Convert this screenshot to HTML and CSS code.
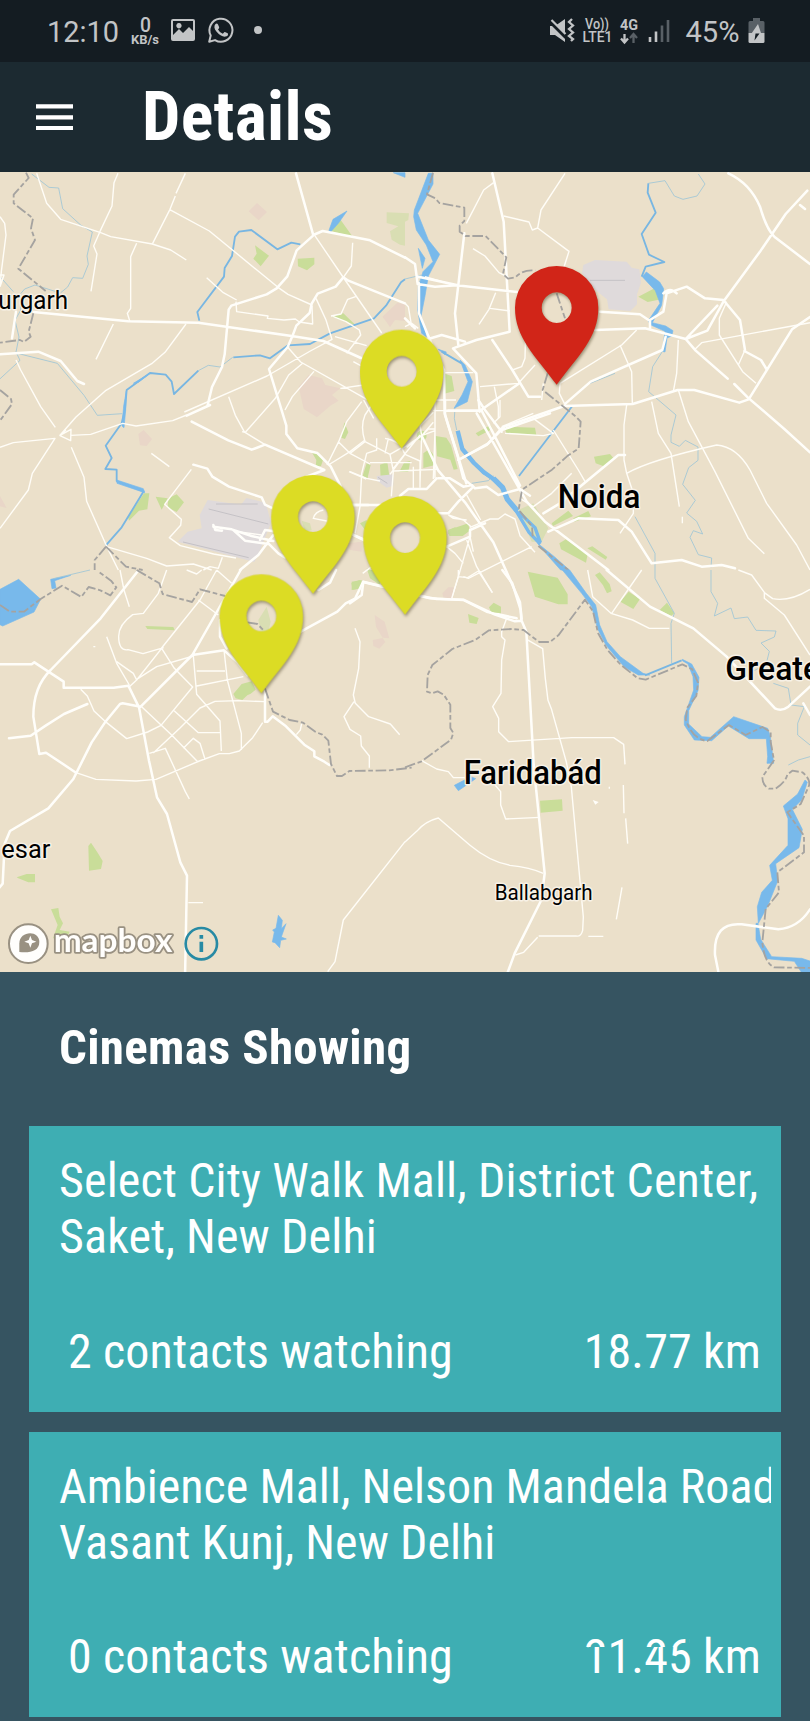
FILE: index.html
```html
<!DOCTYPE html>
<html lang="en">
<head>
<meta charset="utf-8">
<meta name="viewport" content="width=device-width">
<title>Details</title>
<link rel="stylesheet" href="styles.css">
</head>
<body>
<div class="status">
  <svg class="status-icons" viewBox="0 0 405 62" width="405" height="62">
    <text x="47" y="42" font-size="29" textLength="72" lengthAdjust="spacingAndGlyphs">12:10</text>
    <text x="145.500" y="31.500" font-size="21" font-weight="500" text-anchor="middle" textLength="11" lengthAdjust="spacingAndGlyphs">0</text>
    <text x="131" y="43.500" font-size="12" font-weight="700" textLength="28" lengthAdjust="spacingAndGlyphs">KB/s</text>
    <path fill-rule="evenodd" d="M173 19h20q2 0 2 2v18q0 2-2 2h-20q-2 0-2-2V21q0-2 2-2zm0 2v14l6-6 4 4 6-6 4 4V21zm6 2a2.700 2.700 0 1 1-.1 0z"/>
    <path d="M209.200 41.800l1.500-6.300a11.500 11.500 0 1 1 4.300 4.600z" fill="none" stroke="#c2c4c6" stroke-width="2" stroke-linejoin="round"/>
    <path d="M215.500 24q1.500-1.200 2.500.5l1.200 2.800q.2.800-1.200 2.200 1.800 3.300 4.800 4.300l1.700-1.800q.6-.5 3.500 1.400.4 2.800-2.600 3.200-4.600.4-9-5-3.500-4.600-.9-7.600z"/>
    <circle cx="258" cy="30" r="4"/>
  </svg>
  <svg class="status-icons" viewBox="405 0 405 62" width="405" height="62">
    <path d="M550 26h5l10-7v23l-10-7h-5z"/>
    <path d="M549 20.500l17 17" stroke="#141c22" stroke-width="3.500"/>
    <path d="M551.500 20l14 14" fill="none" stroke="#c2c4c6" stroke-width="2.200"/>
    <path d="M572 19l-3 3 4 3.500-4 3.500 4 3.500-4 3.500 4 3-2 2" fill="none" stroke="#c2c4c6" stroke-width="2.300"/>
    <text x="585" y="29" font-size="14" font-weight="500" textLength="24" lengthAdjust="spacingAndGlyphs">Vo))</text>
    <text x="582.500" y="42" font-size="14" font-weight="500" textLength="30" lengthAdjust="spacingAndGlyphs">LTE1</text>
    <text x="620" y="29.500" font-size="14" font-weight="700" textLength="18" lengthAdjust="spacingAndGlyphs">4G</text>
    <path d="M624.500 34v8M621 38.500l3.500 4 3.500-4" fill="none" stroke="#c2c4c6" stroke-width="2.300"/>
    <path d="M633.500 43v-8M630 38l3.500-4 3.500 4" fill="none" stroke="#596066" stroke-width="2.300"/>
    <path d="M650 37v5M656 31.500V42" stroke="#c2c4c6" stroke-width="2.600"/>
    <path d="M662 25.500V42M668 20v22" stroke="#596066" stroke-width="2.600"/>
    <text x="685.500" y="42" font-size="29" textLength="54" lengthAdjust="spacingAndGlyphs">45%</text>
    <path fill="#596066" d="M753 18h7v3h3q1.500 0 1.500 1.500V33h-16V22.500q0-1.500 1.500-1.500h3z"/>
    <path d="M748.500 33h16v8.500q0 1.500-1.500 1.500h-13q-1.500 0-1.500-1.500z"/>
    <path d="M758 24l-6.500 9.500h5L758 33h3z"/>
    <path fill="#141c22" d="M755.500 33.500h4l-5 7z"/>
  </svg>
</div>
<header class="bar">
  <svg class="menu" viewBox="0 0 37 27" width="37" height="27"><path d="M0 2.300h37M0 13.300h37M0 24h37" stroke="#fff" stroke-width="4.200"/></svg>
  <h1 class="title"><span class="cond">Details</span></h1>
</header>
<svg class="map" viewBox="0 6 2430 2400" width="810" height="800">
  <!-- north-west -->
  <g>
    <g class="park">
      <path d="M765 226l42 31-25 32-22-23 10-15zM893 266l50-3v20l-22 18-27-12zM990 182l30-35 38 53zM995 440l35-10 37 36zM1033 757l12 30-10 20-11-4zM935 846l20 0 14 24-6 18-16 2 2-20zM505 985l25-12 22 24-22 29-27-14zM467 980l36 5-18 34zM432 970h16l-6 48-25 4-30 30-3-10zM1100 880l12 5-10 42-14-10zM1140 884l22-8 6 42-26 6zM1080 1060l20-10v36z"/>
    </g>
    <path class="pale" d="M1160 127l67 3-2 20-10 5v72l-15-3-25-15-5-25 25-15-35-10zM905 1052l25 8 5 20-20 5z"/>
    <path class="rose" d="M746 124l25-25 30 27-25 25zM896 650l30-35 40 10 10 20 45 10-25 20 20 17-25 15-40 35-40-25zM1147 440l45-42 23 5v50l-30-3-15 22-15-22zM415 792l16-12 25 27-16 21-20-2zM0 978l20 36-20-5zM1040 1120l45-5v30l-35-5z"/>
    <path class="apron" d="M623 990l100 14 16-20 58 14 16 60-20 50-20 50-10 18-230-61 30-30 42-10-6-40zM1130 918l50-5v34l-20 6-28-20z"/>
    <path class="runway" d="M648 1002h125M626 1017l179 45M549 1116l197 47M1134 922l28 18"/>
    <path class="stream" d="M95 12l52 40 29 2 12 62 55 50 34 20-16 72 4 25-17 42-30-2-15 28-22 18-76-24-31 12-12 14v50l-17 30 12 50-9 45 12 25-66 61M0 320l40 45M52 550l120 30 80 96 40 60 75-5M595 602l30-16 35 5 38-29"/>
    <path class="canal" d="M598 452l-6-26 80-106 2-26 22-36 9-58 12-15 37-5 78 58 42-20 27 5M1215 328l-12 9-45 70-36 38-132 45-60 32-66 4-54 39-30-9-80 6M595 602l-73 70-7-37-18-21-47-5-70 51-5 58-10 42-48 67 18 37-19 33 34 2v34l81 31-66 108-48 55"/>
    <path class="waterfill" d="M987 181l12-33 42-25-26 37-24 27zM350 930l80 26 4 12-83-28zM366 768l5-60 8-45-2 58-5 52zM400 640l50-30-35 27zM1180 8h35v14z"/>
    <path class="road" d="M110 10l30 90 42 48 120 40 30 12 125 22 55 18 47 30M354 10l-12 28-6 70-35 74-20 46 10 24-18 112M556 10l-28 60M526 78l-16 40-52 102M508 118l120 65 206 169 30 21 72 32M410 220l-18 40v155l-10 15 8 25M0 140l14 20 4 35-14 110-4 45M0 315h12l-12 35M620 323l50 45 40 22M340 462l-52 106M558 462l-63 85-40 34-137 80-90 80-48 55 33-18-1 34-32-15 18-18M0 832l40-14 125-13-68 105-12 50-85 115M48 570l14 30 60 110 44 62M214 832l38 90 8 72 60 135 35 71M212 796l60-3 96-33 40 8 110-16 42-17M454 850l54 40M574 898l-80 105 50 45-2 18-34 37 33 24 100 25 67 12M708 395l2 30 94 13-2 7 50 5 34-3 12 9 40 6-2-55M948 385l30 65 18 58-65 35-130 75-248 108M686 680l20 56 28 51-8-2M736 787l90-102 40-70 42-35M735 787l60 37M855 720l22-40 65-76M862 530l40 46 200 113M1067 380l-24 8-20 44-30 6M1058 218l-4 70-24 34M944 196l85 125 116 168M1000 440l38 15 40 25 4 15-42 55M1005 500l95 27M1021 655l70-10M1085 695l-45 60-24 60-35 70M1091 690l30 55M985 885l65-40 45-35M1015 815l35 35 60 32M1047 905l52 22M715 1085l70 10M1060 575l22 12M320 1130l120 35 60 23 80-6 55 18M610 1200l20-10 25 5 12-33M970 1020q-25 5-30 25l40 8"/>
    <path class="major" d="M888 10l52 186-50 45-28 78-32 36-30 18-106 34-8 12-12 134-8 38-30 60-13 54M940 195l28-12 142 28 105 52M1215 400l-170-68-15-10-23 28-54 21-18 30-6 28-40 38-12 32-14 32-56 66 52 170v25l33 43 60 14 40 40 30 60M100 426l285 28 210 4 280 40 95 15 113 51M575 755l110 56 70 28 40-15 178 76-80 30M580 884l42 12 15 24 50 30 98 32 10 22 25 12M0 553l115-8 67 28 50 60 20 9M48 425l-12 80M560 737l70-32M720 1200l55-45 45-60M780 1110l15-30 40 5M805 1120l30 30 20 12M1060 1005h155M1060 1095l30 15M640 1070l55 8 60 20 65 15M640 1065l6 15 20 2M700 1080l35 32 70 10"/>
    <path class="border" d="M78 8l8 16-45 50 0 26 58 45-6 30 12 35-50 86 82 67M100 430l-14 55 6 15-20 16-12-6-60 8M0 660l33 27 3 15-36 50M318 1130l-34 40v30M318 1130l60 60 50 10"/>
  </g>
  <!-- north-east -->
  <g transform="translate(1215 0)">
    <path class="park" d="M115 610l25 8 8 45-30 8zM212 790l45-25 5 12-42 22zM298 770l92 3 4 22-90-6zM92 798l32 5 14 22 20 72-12 2-10-30-40-10zM55 850l17-12 15 18v30l-32 8zM567 860l48-8 10 12-25 26-28-10zM660 380l25-7 8 14-15 16-18-6zM700 380l50-26 24 10-6 24-40 8zM130 1080l60-20 3 20-25 15-38-2zM440 1060l50-38 14 16-60 30zM505 1045l45-22 8 16-50 16zM463 1120l20-12 65 45-5 25-75-40zM547 1135l15-6 45 32-5 8zM0 875l12 5-5 20-7 2z"/>
    <path class="pale" d="M340 1020l45-20 45 75-20 40-30 0z"/>
    <path class="apron" d="M535 285l35-15 95 5 15 18 23 5 5 40-12 35v30l-20 20-65-5-5-30-50-40-25-40z"/>
    <path class="runway" d="M555 331h105"/>
    <path class="waterfill" d="M70 10h14v32l-46 88 32 80 34 43-34 65-10 60-12 60 16 62-14-10-12-70 2-70 14-45 30-30-20-50-30-45-8-40 2-20zM40 235l20 30-8 30zM100 538l24 8-4 8zM165 570l15 15 22 50-15 60-40 20 24-40 18-40zM712 320l12-14 40 30 12 20-6 50-28 52 40 10 22 14-4 16-14 6-6 42-8-2 8-60-44-20-6-12 35-52-14-38zM398 1120l50 40 45 40h-26l-40-45z"/>
    <path class="stream" d="M730 40l50-8 28 46 26 10 42-10 24-36-20-30M775 540l-32 50-12 75 82 70-15 60v22l25 12 18-18 38 20v40l-28 22-18 50 38 48-26 38 30 25 18 38-28-10-10 20 25 52 40 10-2 28M690 1040l60 110v50M0 327l50-12M200 940l50-8 15-15"/>
    <path class="canal" d="M730 40l-2 28 24 60-42 64 22 62 46 22-56 14-12 30M502 708l-160 210M110 545l60 35"/>
    <path class="stream" d="M150 715l-2 30 7 35M555 640l75-30"/>
    <path class="wide" stroke-width="13" d="M158 782l14 55 35 42 30 28 42 30"/>
    <path class="wide" stroke-width="6" d="M205 875l30 35 40 22"/>
    <path class="wide" stroke-width="16" d="M265 925l28 28 14 35 30 35"/>
    <path class="wide" stroke-width="10" d="M327 1012l45 75 34 35M340 1025l50 48 16 45"/>
    <path class="road" d="M480 10l-72 110-10 54 94 70-16 50M398 174l-16 6-10-24-76-18M266 38l-30 22-52 100M204 236l36 22 42 50 30 15M272 368l-20 50-30 45M255 415l60 8M362 480l-2 85-10 25-28 10M390 585l-50 55-115 10M465 640l185-115 45-45M465 640l-2 30 20 40M645 525l35 80 2 95M268 650l12 60v35M415 640l-5 50M665 705l-8 60v105l8 40 20 60v60l-40 60M740 695l20 95 38 60 25 160M820 660l30 95 80 150 100 200 48 46M820 510l-5 100-10 55M1215 458l-325 60-20 20M965 395l-22 50 0 50 70 110 40 35M1020 540l-20 45M445 780l75 120 22 38M665 910q70-40 270-85 60 5 100 75l50 100 90 125 40 75M832 1040v20M345 985l40 25 55-40 60-60M115 608h90M115 690h38M60 320l70 20M385 745l60 45-30 7-115-7M290 770l95-40M0 470l20-10 20 15M0 400l10 10 10 60"/>
    <path class="major" d="M262 10l34 145 18 330-100 25-70 25 70 75 10 115M178 190l-28 240 10 95M0 262l30 20 8 60 52 8 65-4 182 20M40 320l115 25M42 340l0 90 45 110 30 60 2 130 65 210M60 510l50-15 70 20M0 445l30 30M262 510l60 90 48 80h35M225 722l115-80M160 870l90-50 48-50 180-62 205-6 135-42 50 0 135 38 28-10 130-210 95-65M230 722l-110 0M230 722l115 225M215 730l150 265 55 60 190 145M482 700l75-65 215-95 10-40M570 480l150-5 122 32 65-25 50-90 110-150 75-110 65-70M842 507l30 35 96 84M842 507l95-100M585 425l120 8 30 20v25M735 450l40-25 10-55 60-20 55 35 55 5 50 60 15 90M775 370q20-20 40 0M988 642l40 40 110 95 77 70M970 10q65 30 95 100 20 70 45 92l105 80M1018 543l50 27 18 30M1185 105l15 12M415 1030l50-30 175-145h20M430 1085l90-40 120 5 40 35 60 95 90-10 60 20 60-5 40 10"/>
    <path class="border" d="M84 8l-18 65 25 12 12 14 75 14v40l-14 14v18l18 13h60l62 64-10 50 15 14 22-4q25-25 60-20M455 370l25 75M428 610l-15 50 100 80 14 15-6 80-35 24-45 40-90 60-10 60 40 50 2 30M400 1128l90 72"/>
  </g>
  <!-- Delhi centre -->
  <g transform="translate(1050 690)">
    <circle cx="215" cy="107" r="15" fill="#c9dd99"/>
    <path class="park" d="M148 215l15-28 18-4-6 32zM295 390l20-8 10 6 25-15 8 20-20 15h-40zM50 505l40 20v30l-30-20zM5 545l30-5v25l-30 5z"/>
    <path class="road" d="M75 0L45 45q-15 35 0 80l-45 35M45 125l75 38 35-20M105 115l20 5 25 12M80 115v35l-30 10-15 60-5 100-15 80M120 163l10 50-6 76M105 160l10-45M155 143l10 20 45 20v80M165 163l-45 60M130 205l80-100M130 213l135-5M190 200v65M60 188h125M0 215l50 20 40 8M215 107l-45 35M215 107l40-15-5 145M215 107L210 250M215 107l-60 40M215 107l20-20h20M215 107l-5-30 40-40M215 107l35-40M240 20L215 60M255 0v235M285 0h-30M250 32h60M350 285l42 75M295 345l45 15 25 22M295 345l15 10 40 5M360 410l-35 120-20 65M340 530l15 5 190-95M290 440l25 20 25 30M350 420l30 80 47 78M360 382l60-25 25 0 20-15 30 15 15 50 45 50M450 0v50l-20 20M38 520l40-30M370 455l-10-45"/>
    <path class="major" d="M285 0v45l40 130 15 60 35 30 35-5 35 25 65-18 30 20M215 107l50 105 80 95 85 120 45 100 35 80 5 50M260 235l-30 32h-55l-25 20M265 235h35l40 25 25-5 10 10M365 265l-40 40-30 35-30 0M290 440l70-30v-20l45-20M0 315h55M0 400l45 20M0 610l35-25 5-40 100 25 100 25 100 5 70 35 90 20M385 0l20 30 50 65M395 32l-100 0M455 90l145-50M325 180l85-45 45-50"/>
  </g>
  <!-- south-west -->
  <g transform="translate(0 1200)">
    <path class="park" d="M436 168l84 3 4 10-82-4zM700 372l25-30 30-8 12 25-15 12-10 5-15 14-20-5zM265 828l8-10 20 30 15 25-5 24-36 5zM50 922l30-10 25 0v25l-20 0-30-12zM153 1018l22-4 4 26 10 20-10 20 30 5-10 20-40 0 14-40zM1054 40l25-10 4 25-24 4zM1110 0h15l10 40z"/>
    <path class="pale" d="M775 150l25-40 12 45-8 35-22-4z"/>
    <path class="rose" d="M1124 135l30 20 14 50-20-2-20-32zM1118 210l30-6 8 12-18 20-18-8z"/>
    <path class="waterfill" d="M0 58l56-30 66 60-20 38-94 42-8-4zM152 28l60-12-48 16 4 22-12 2zM835 1036l12 15-3 25 14-15-14 40 15 6-17 4-3 22-14-15-8-2 6-30-5-6 10-5z"/>
    <path class="stream" d="M160 26l110-26"/>
    <path class="road" d="M500 0l-25 70-45 60-32 4q-42 30-42 65 0 45 28 40l45 12 62-18M650 0l-50 90-120 150M650 0l45 40M360 0l12 60 16 50M560 0l30 12 15-12M595 90l60 45M320 200l30 80 38 65M350 275l50 35 10 20-22 20M410 330l75-95 38 60 55 56-95 115-40 20-63 20-60-48-38-35-20-45-20-20M410 328l60-38 110-32M580 258l10 115 70 80 4 90M590 303h85M590 348l140-28M672 240l10 90 42 160v50M795 395l-80-3-70 2-45 20-60 60-80 75M425 410l90 85 78 80M520 420l75 68h68M550 535l30-30 20 15 15 48M448 550l48-15 60 130 12 22M228 608l60 20 120 5 60-5 130-55 60-22h30l30-8 40-40 30-45M1065 175l15 40-4 80-16 80 6 25 40 40 65 22 28 32M1062 395l-30 45 18 38 32 20 2 30 24 30v35M905 460l-4 20-12 14M565 998h44M1215 815l-185 235-25 125-22 30M280 230h6"/>
    <path class="major" d="M412 5l-110 140-150 155Q100 350 100 440l18 112 20-4 90 60M0 283h95l8-6 88 58v18h150l44-6 32 65 30 160 24 110 30 50 40 145 20 40-6 310M722 0l-145 255-155 155-54-10-8 2-45 55-40 60-55 110-75 88-115 68-16 38-6 120-10 12M262 402l-70 30-55 35-45 30-65 8M577 255l95-14 40 35 30 40M795 360v95l8 0 15-16 40 30 55 55 30 20 0 15 30 16 15 10M902 185l110-60 25-25 28-14 24-50 60 14M955 60l35-22 18-38M660 150v50l20 35"/>
    <path class="border" d="M0 105l30 20h42l50-38 64-40 58 34 22-30 35 10 30 15 18-24-16-20-38-27M410 0l68 40 10 32 88 24 24-38 76 20M742 157l30 5 20 20M795 355l24 70 50 25 40 8 38 28 20 8 18 18 8 70 18 36 15 0 22-15 120-2 67-8"/>
  </g>
  <!-- south-east -->
  <g transform="translate(1215 1200)">
    <path class="park" d="M368 5l90 18 30 50v30l-28 0-70-23zM570 15l14-8 30 35 6 22-14 6-12-24zM646 95l25-30 34 22-20 30zM764 120l22-22 22 32-10 8zM252 112l14-14 22 12v20l-30-4zM189 132l32 12-6 18-22-4zM405 692l66-4 2 34-66 6z"/>
    <path class="rose" d="M112 70l18-18 16 0-5 34-26-4z"/>
    <path class="waterfill" d="M472 0h22l50 70 28 35 12 60 22 50 40 45 68 50 20 5-34 0-42-24-55-65-25-50-18-66-30-40zM148 646l50-26 14 6-52 36zM832 268l28 14 22 40-3 40-28 60 0 40 40 38 25 2 70-62 102 35 8 25 10 80-20 0 2-20-4-54-52 0-62-38-50 44-52-2-30-45v-25l28-80-2-40-15-38-17-10zM1200 630l7 6-17 54-28 28 30 60-10 55-70 48 6 52-30 75-28 52-3-50 13-43 32-36-8-45 55-60 0-80-14-38 43-36zM1053 1060h6l8 48 33 52 90 5 25 8v35h-25l-22-34-83-8-32-56z"/>
    <path class="stream" d="M750 0v25l58 105-10 30 2 120M918 0v65l20 35-10 38 50-24 10 32 40-5 25 40 60 2-5 18-40 18 25 25-10 40-40 20M1105 340l45 15 8 50 40 5-20 50 0 35 37 30M1215 560l-35 10-30 15"/>
    <path class="canal" d="M720 316l110-45"/>
    <path class="road" d="M160 0v20l28 3M160 20l-20 65M188 23l32-20 42 65M548 0l15 80 55 50 65 20 50 25h60M710 0l-90 130M1000 0l40 15 38 52v18l60 50 77 120M1078 68l25 18q50 10 112-28M305 145l-15 40v15l10 10-10 60-2 100-25 40 18 35v40l30 30 190-12 125 0 30 20 4 60M365 208l48 28 8 90 8 65 10 25 45 160 15 75 36 390-2 40q-5 20-20 17h-112M270 645l17 20v40l15 42 102-5M415 910q-40-18-100-24-60-10-120-60l-95-82q-40 10-65 40l-35 32M50 572l45 25 35 8 15 18h35M655 645l2 85M662 745l6 76M651 952l-17 96M550 1099h45M331 1155l25-8 42-45M613 650v6"/>
    <path fill="#fffefa" d="M563 690l18 6-10 8z"/>
    <path class="major" d="M292 0l30 40 25 80 2 30 15 35 22 400 33 325-10 80-80 160-22 60M350 152l-20 2-60-20-95-45-80-2-45-8M605 0l130 110 130 65 100 85 145 155q20 10 40-5l65-60M1195 400l20 35M940 1205l-10-50q-5-100 80-92l110 15q60-5 95-60"/>
    <path class="border" d="M0 592l50-18 88-65 7-20-9-15v-70l-20-30-18-10-18 6-14-5 2-50 14-30 60-48 70-28 40-28 68-4 36 3 25 20 22 16h32l25-20 80-107 24 35 15 65 28 50 40 45 50 40 25 5 110-46 30 15 17 40-5 40-27 35-5 35q20 60 65 65l65-48 50 30 50-24 25 15 0 30 10 55-35 50q0 25 20 35h20q30-20 35-42l15-12 30 5q25 20 20 40l-25 55-40 25 50 70v50l-80 60 5 60-40 50-10 100q5 60 35 75l122 2"/>
  </g>
  <g class="labels">
    <text x="-5" y="418" font-size="76" textLength="209" lengthAdjust="spacingAndGlyphs">urgarh</text>
    <text x="1673" y="1013" class="city" font-size="97" textLength="248" lengthAdjust="spacingAndGlyphs">Noida</text>
    <text x="2176" y="1529" class="city" font-size="98" textLength="318" lengthAdjust="spacingAndGlyphs">Greater</text>
    <text x="1391" y="1841" class="city" font-size="97" textLength="414" lengthAdjust="spacingAndGlyphs">Faridabád</text>
    <text x="4" y="2065" font-size="76" textLength="147" lengthAdjust="spacingAndGlyphs">esar</text>
    <text x="1484" y="2189" font-size="65" textLength="294" lengthAdjust="spacingAndGlyphs">Ballabgarh</text>
  </g>
  <g class="pins">
    <defs><path id="pin" fill-rule="evenodd" d="M0 356C-65 268-125 215-125 125A125 125 0 0 1 125 125C125 215 65 268 0 356zM0 79a45 46 0 1 0 .1 0z"/></defs>
    <use href="#pin" x="1670" y="288" fill="#d12518"/>
    <use href="#pin" x="1205" y="479" fill="#dcdc24"/>
    <use href="#pin" x="939" y="915" fill="#dcdc24"/>
    <use href="#pin" x="1215" y="978" fill="#dcdc24"/>
    <use href="#pin" x="784" y="1213" fill="#dcdc24"/>
  </g>
  <g>
    <circle cx="85" cy="2321" r="58" fill="#fffefc" stroke="#999182" stroke-width="6"/>
    <path fill="#999182" d="M58 2346v-26c0-38 60-42 60-4 0 28-30 34-60 30z"/>
    <path fill="#fffefc" d="M91 2297l5 13 13 5-13 5-5 13-5-13-13-5 13-5z"/>
    <text class="brand" x="161" y="2345" textLength="356" lengthAdjust="spacingAndGlyphs">mapbox</text>
    <circle cx="604" cy="2321" r="47" fill="none" stroke="#278aa4" stroke-width="8"/>
    <path stroke="#278aa4" stroke-width="11" d="M604 2295v11M604 2315v31"/>
  </g>
</svg>
<main class="panel">
  <h2 class="heading"><span class="cond">Cinemas Showing</span></h2>
  <article class="card">
    <p class="address"><span class="cond">Select City Walk Mall, District Center,<br>Saket, New Delhi</span></p>
    <div class="meta"><span class="cond">2 contacts watching</span><span class="cond">18.77 km</span></div>
  </article>
  <article class="card">
    <p class="address tight"><span class="cond">Ambience Mall, Nelson Mandela Road,<br>Vasant Kunj, New Delhi</span></p>
    <div class="meta"><span class="cond">0 contacts watching</span><span class="cond stack"><span class="lower">11.45 km</span><span class="upper" aria-hidden="true">21.26 km</span></span></div>
  </article>
</main>
</body>
</html>
```
FILE: styles.css
```css
* { box-sizing: border-box; }
body { margin: 0; width: 810px; height: 1721px; overflow: hidden; background: #365461; font-family: Roboto, "Liberation Sans", sans-serif; color: #fff; }
h1, h2, p { margin: 0; }
svg { display: block; }
.status { display: flex; height: 62px; background: #141c22; }
.status-icons { fill: #c2c4c6; }
.bar { display: flex; align-items: center; gap: 69px; height: 110px; padding-left: 36px; background: #1c2a31; }
.cond { display: inline-block; font-family: "Roboto Condensed", Roboto, sans-serif; font-stretch: 75%; white-space: nowrap; }
.title { font-size: 68px; line-height: 80px; font-weight: 700; letter-spacing: .3px; }
.map { overflow: hidden; background: #ebe0ca; }
.map path { stroke-linejoin: round; }
.park { fill: #c9dd99; }
.pale { fill: #d9deb3; }
.rose { fill: #e9d6c8; }
.apron { fill: #dfdadb; }
.runway { fill: none; stroke: #c5c2c6; stroke-width: 3; }
.waterfill { fill: #78b9eb; stroke: #78b9eb; stroke-width: 2; }
.stream { fill: none; stroke: #9dc5d6; stroke-width: 2.5; }
.canal { fill: none; stroke: #78b6e2; stroke-width: 5.5; }
.wide { fill: none; stroke: #78b9eb; }
.road { fill: none; stroke: #fffdf7; stroke-width: 4.2; }
.major { fill: none; stroke: #fffefa; stroke-width: 7.5; stroke-linecap: round; }
.border { fill: none; stroke: #a5a3a0; stroke-width: 5.5; stroke-dasharray: 32 8 14 8; }
.labels { fill: #000; stroke: #f7f1e6; stroke-width: 9; paint-order: stroke; stroke-linejoin: round; }
.city { font-weight: 500; }
.pins { filter: drop-shadow(3px 6px 5px rgba(60, 50, 20, .45)); }
.brand { font: 700 100px Lato, sans-serif; fill: #fffefc; stroke: #999182; stroke-width: 11; paint-order: stroke; stroke-linejoin: round; }
.panel { display: flex; flex-direction: column; gap: 20px; padding: 0 29px; }
.heading { height: 134px; padding: 47px 0 0 30px; font-size: 49px; line-height: 58px; font-weight: 700; letter-spacing: .3px; }
.card { display: flex; flex-direction: column; justify-content: space-between; height: 285.5px; padding: 27px 10px 32px 30px; background: #3eaeb3; letter-spacing: .13px; }
.address { overflow: hidden; font-size: 48px; line-height: 56px; }
.tight { letter-spacing: .06px; }
.meta { display: flex; justify-content: space-between; padding: 0 10px 0 9px; font-size: 48px; line-height: 56px; }
.stack { display: grid; }
.stack > span { grid-area: 1 / 1; }
.lower { clip-path: polygon(0 18px, 24px 18px, 24px 0, 57px 0, 57px 18px, 106px 18px, 106px 0, 100% 0, 100% 100%, 0 100%); }
.upper { clip-path: polygon(0 0, 24px 0, 24px 18px, 57px 18px, 57px 0, 106px 0, 106px 18px, 0 18px); }
```
